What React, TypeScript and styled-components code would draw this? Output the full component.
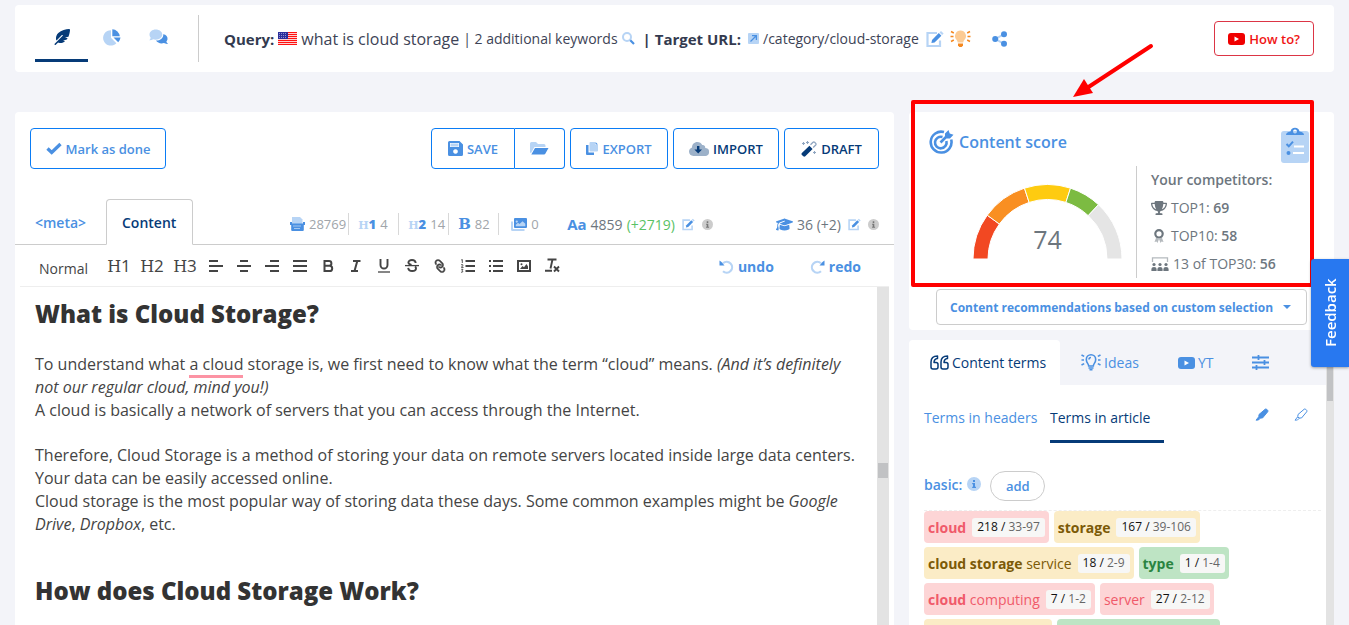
import React from "react";
import styled, { createGlobalStyle, css } from "styled-components";
import { FaFeatherPointed, FaGraduationCap, FaLink, FaTrophy } from "react-icons/fa6";

const blue = "#4a90e2";
const pale = "#b7d4f5";
const navy = "#063b78";
const grey = "#6d767e";

const GlobalStyle = createGlobalStyle`
  *, *::before, *::after { box-sizing: border-box; }
  body {
    margin: 0;
    background: #f3f4f9;
    font-family: "Open Sans", "Noto Sans", sans-serif;
    font-size: 14px;
    color: #3d4356;
  }
  button { font: inherit; background: none; border: 0; padding: 0; cursor: pointer; }
  a { color: inherit; text-decoration: none; }
  svg { flex: none; display: block; }
`;

const Page = styled.div`
  height: 100vh;
  overflow: hidden;
  display: flex;
  flex-direction: column;
  gap: 40px;
  padding: 5px 15px 0;
`;

/* ---------- header ---------- */

const Header = styled.header`
  display: flex;
  align-items: center;
  flex: none;
  height: 67px;
  padding: 0 20px;
  background: #fff;
  border-radius: 4px;
`;

const MainNav = styled.nav`
  display: flex;
  align-self: flex-start;
  margin-top: 10px;
  padding-right: 16px;
  border-right: 1px solid #ccc;
`;

const NavLink = styled.a<{ $active?: boolean }>`
  display: flex;
  align-items: center;
  justify-content: center;
  width: ${(p) => (p.$active ? 53 : 47)}px;
  height: 47px;
  border-bottom: 3px solid ${(p) => (p.$active ? navy : "transparent")};
`;

const Query = styled.div`
  display: flex;
  align-items: center;
  gap: 4px;
  margin-left: 25px;
  white-space: nowrap;
  font-size: 14px;
`;

const QueryLabel = styled.strong`
  font-size: 15px;
  color: #333a4f;
`;

const QueryText = styled.span`
  font-size: 16px;
`;

const TargetLabel = styled(QueryLabel)`
  margin: 0 3px 0 4px;
`;

const IconButton = styled.button<{ $before?: number }>`
  display: flex;
  align-items: center;
  margin-left: ${(p) => p.$before ?? 0}px;
`;

const HowTo = styled.a`
  display: flex;
  align-items: center;
  gap: 4px;
  height: 35px;
  margin-left: auto;
  padding: 0 13px;
  border: 1px solid #dc3545;
  border-radius: 4px;
  color: #f01414;
  font-size: 13px;
  font-weight: 600;
`;

/* ---------- columns ---------- */

const Columns = styled.main`
  display: grid;
  grid-template-columns: minmax(0, 1fr) 425px;
  gap: 15px;
  flex: 1;
  min-height: 0;
`;

const EditorCard = styled.section`
  display: flex;
  flex-direction: column;
  min-height: 0;
  background: #fff;
  border-radius: 4px 4px 0 0;
`;

const ActionBar = styled.div`
  display: flex;
  gap: 5px;
  padding: 16px 15px 30px;
`;

const Action = styled.button<{ $dark?: boolean; $wide?: number; $join?: "left" | "right" }>`
  display: flex;
  align-items: center;
  justify-content: center;
  gap: 4px;
  height: 41px;
  min-width: ${(p) => p.$wide}px;
  border: 1px solid #0a7cf5;
  border-radius: 4px;
  color: ${(p) => (p.$dark ? navy : blue)};
  font-size: 13px;
  font-weight: 600;
  ${(p) => p.$join === "left" && css`border-radius: 4px 0 0 4px;`}
  ${(p) => p.$join === "right" && css`border-radius: 0 4px 4px 0; border-left: 0;`}
`;

const ActionPair = styled.div`
  display: flex;
  margin-left: auto;
`;

const TabRow = styled.div`
  display: flex;
  align-items: flex-end;
  padding: 0 15px;
  border-bottom: 1px solid #ccc;
`;

const EditorTab = styled.button<{ $active?: boolean }>`
  height: 46px;
  margin-bottom: -1px;
  border: 1px solid ${(p) => (p.$active ? "#ccc" : "transparent")};
  border-bottom-color: ${(p) => (p.$active ? "#fff" : "transparent")};
  border-radius: 4px 4px 0 0;
  padding: 0 ${(p) => (p.$active ? 15 : 4)}px;
  min-width: ${(p) => (p.$active ? 87 : 76)}px;
  text-align: left;
  font-weight: 600;
  color: ${(p) => (p.$active ? navy : blue)};
`;

const Stats = styled.ul`
  display: flex;
  list-style: none;
  margin: 0 0 9px 94px;
  padding: 0;
`;

const Stat = styled.li`
  display: flex;
  align-items: center;
  gap: 4px;
  height: 22px;
  min-width: 50px;
  padding: 0 2px 0 9px;
  color: #a0a5aa;
  font-size: 13px;
  border-right: 1px solid #d8d8d8;
  &:first-child { padding-left: 3px; }
  &:last-child { border-right: 0; padding-left: 12px; }
`;

const HeadingMark = styled.b`
  font-family: "DejaVu Serif", serif;
  font-size: 11px;
  color: ${pale};
  span { color: ${blue}; font-family: "Open Sans", sans-serif; font-size: 13px; font-weight: 800; }
`;

const BoldMark = styled.b`
  font-family: "DejaVu Serif", serif;
  font-size: 15px;
  color: ${blue};
`;

const Counter = styled.div<{ $end?: boolean }>`
  display: flex;
  align-items: center;
  gap: 4px;
  height: 22px;
  margin: 0 0 9px ${(p) => (p.$end ? "auto" : "18px")};
  color: ${grey};
  font-size: 14px;
  white-space: nowrap;
  button { margin-left: 3px; }
`;

const CaseMark = styled.b`
  color: ${blue};
  font-size: 15px;
`;

const Gain = styled.span`
  color: #59c265;
`;

const FormatBar = styled.div`
  display: flex;
  align-items: center;
  gap: 14px;
  height: 42px;
  margin: 0 5px;
  padding: 0 28px 0 19px;
  border-bottom: 1px solid #eee;
  color: #444;
`;

const StylePicker = styled.button`
  width: 54px;
  padding-top: 5px;
  text-align: left;
  color: #444;
`;

const HeadingButtons = styled.div`
  display: flex;
  gap: 9px;
  margin-right: -2px;
`;

const HeadingButton = styled.button`
  width: 24px;
  color: #444;
  font-family: "DejaVu Serif", serif;
  font-size: 16px;
  white-space: nowrap;
  span { font-family: "Open Sans", sans-serif; font-size: 17px; }
`;

const FormatButton = styled.button`
  display: flex;
  align-items: center;
  justify-content: center;
  width: 14px;
  height: 18px;
  color: #444;
`;

const HistoryButtons = styled.div`
  display: flex;
  gap: 36px;
  margin-left: auto;
  padding-top: 2px;
`;

const HistoryButton = styled.button`
  display: flex;
  align-items: center;
  gap: 4px;
  color: ${blue};
  font-weight: 700;
`;

const EditorBody = styled.div`
  display: flex;
  flex: 1;
  min-height: 0;
  margin-right: 5px;
`;

const Article = styled.article`
  flex: 1;
  min-width: 0;
  overflow: hidden;
  padding: 10px 10px 0 20px;
  color: #444;
  font-size: 16px;
  line-height: 23px;
`;

const ArticleTitle = styled.h2`
  margin: 0 0 23px;
  color: #333;
  font-size: 24px;
  line-height: 33px;
  font-weight: 800;
`;

const Paragraph = styled.p<{ $last?: boolean; $spaced?: boolean }>`
  margin: 0 0 ${(p) => (p.$last ? 38 : p.$spaced ? 22 : 0)}px;
`;

const Misspelt = styled.span`
  border-bottom: 3px solid #fc93a4;
`;

const Track = styled.div<{ $size: number }>`
  flex: none;
  width: ${(p) => p.$size}px;
  padding: 0 1px;
  background: #e3e3e3;
`;

const Thumb = styled.div<{ $top: number; $length: number }>`
  height: ${(p) => p.$length}px;
  margin-top: ${(p) => p.$top}px;
  background: #c1c2c4;
`;

/* ---------- score card ---------- */

const Side = styled.aside`
  position: relative;
  display: flex;
  flex-direction: column;
  gap: 10px;
  min-height: 0;
`;

const ScoreCard = styled.section`
  flex: none;
  padding: 15px 25px 5px 20px;
  background: #fff;
  border-radius: 4px;
`;

const ScoreHead = styled.div`
  display: flex;
  justify-content: space-between;
  height: 39px;
`;

const ScoreTitle = styled.h3`
  display: flex;
  align-items: center;
  gap: 5px;
  height: 30px;
  margin: 0;
  color: ${blue};
  font-size: 16px;
  font-weight: 600;
`;

const ScoreBody = styled.div`
  display: flex;
  height: 112px;
`;

const GaugeBox = styled.div`
  flex: 1;
  padding: 18px 0 0 44px;
`;

const Competitors = styled.ul`
  list-style: none;
  flex: none;
  width: 173px;
  margin: 0;
  padding: 0 0 0 14px;
  border-left: 1px solid #ccc;
  color: ${grey};
`;

const Competitor = styled.li`
  display: flex;
  align-items: center;
  gap: 4px;
  height: 28px;
  padding-bottom: 1px;
  white-space: nowrap;
  b { font-weight: 600; }
`;

const Recommendations = styled.button`
  display: flex;
  align-items: center;
  gap: 10px;
  width: 371px;
  height: 36px;
  margin: 11px 0 0 7px;
  padding: 0 13px;
  border: 1px solid #ccc;
  border-radius: 4px;
  color: ${blue};
  font-size: 12px;
  font-weight: 700;
  white-space: nowrap;
`;

const Caret = styled.span`
  border: 4px solid transparent;
  border-top-color: ${blue};
  border-bottom: 0;
`;

const Highlight = styled.div`
  position: absolute;
  top: -12px;
  left: 2px;
  right: 20px;
  height: 187px;
  border: 4px solid #f00;
  border-radius: 2px;
  pointer-events: none;
`;

const Arrow = styled.svg`
  position: absolute;
  top: -72px;
  left: 160px;
  pointer-events: none;
`;

/* ---------- terms panel ---------- */

const TermsPanel = styled.section`
  display: flex;
  flex: 1;
  min-height: 0;
`;

const TermsMain = styled.div`
  display: flex;
  flex-direction: column;
  flex: 1;
  min-width: 0;
  overflow: hidden;
`;

const PanelTabs = styled.div`
  display: flex;
  flex: none;
`;

const PanelTab = styled.button<{ $active?: boolean }>`
  display: flex;
  align-items: center;
  gap: 3px;
  height: 45px;
  padding: 0 ${(p) => (p.$active ? 14 : 18)}px 0 21px;
  border-radius: 4px 4px 0 0;
  background: ${(p) => (p.$active ? "#fff" : "transparent")};
  color: ${(p) => (p.$active ? navy : blue)};
`;

const TermsBody = styled.div`
  flex: 1;
  min-height: 0;
  overflow: hidden;
  padding: 0 5px 0 15px;
  background: #fff;
`;

const TermTabs = styled.div`
  display: flex;
  align-items: center;
  height: 58px;
  gap: 25px;
  padding-right: 13px;
`;

const TermTab = styled.button<{ $active?: boolean }>`
  align-self: stretch;
  width: 114px;
  margin-right: ${(p) => (p.$active ? "auto" : "-13px")};
  padding-top: 10px;
  border-bottom: 3px solid ${(p) => (p.$active ? navy : "transparent")};
  color: ${(p) => (p.$active ? navy : blue)};
  text-align: left;
  white-space: nowrap;
`;

const GroupHead = styled.div`
  display: flex;
  align-items: center;
  gap: 5px;
  height: 68px;
  padding: 28px 0 10px;
  border-bottom: 1px dashed #eee;
  color: ${blue};
  font-weight: 600;
`;

const GroupName = styled.span`
  display: flex;
  align-items: center;
  gap: 5px;
  padding-bottom: 3px;
`;

const AddButton = styled.button`
  width: 55px;
  height: 30px;
  margin-left: 4px;
  border: 1px solid #ccc;
  border-radius: 15px;
  color: ${blue};
  font-size: 13px;
  font-weight: 600;
`;

const Chips = styled.div`
  display: flex;
  flex-direction: column;
  gap: 4px;
`;

const tones = {
  red: ["#fdd5d6", "#f05a6a"],
  amber: ["#fbecc6", "#7c5a07"],
  green: ["#bee4c4", "#2a8441"],
};

const Chip = styled.button<{ $tone: keyof typeof tones; $wide?: number }>`
  display: flex;
  align-items: center;
  gap: 6px;
  height: 32px;
  min-width: ${(p) => p.$wide ?? 0}px;
  padding: 0 4px;
  border-radius: 4px;
  background: ${(p) => tones[p.$tone][0]};
  color: ${(p) => tones[p.$tone][1]};
  white-space: nowrap;
`;

const Count = styled.span`
  height: 19px;
  padding: 0 5px;
  border-radius: 3px;
  background: #f7f7f6;
  color: #666;
  font-size: 12px;
  line-height: 18px;
  b { font-weight: 400; color: #111; }
`;

const ChipRow = styled.div`
  display: flex;
  gap: 5px;
`;

const Feedback = styled.button`
  position: fixed;
  top: 259px;
  right: 0;
  width: 38px;
  height: 108px;
  padding-right: 1px;
  background: #2878f0;
  box-shadow: 0 -1px 3px rgba(0, 0, 0, 0.35);
  color: #fff;
  font-size: 15px;
  font-weight: 600;
  writing-mode: vertical-rl;
  transform: rotate(180deg);
  border-radius: 0 3px 3px 0;
`;

/* ---------- icons ---------- */

const CheckIcon = () => (
  <svg width="16" height="13" viewBox="0 0 16 13">
    <path d="M1.500 6.500L5.700 10.500L14.500 2" fill="none" stroke={blue} strokeWidth="3.300" />
  </svg>
);

const PieIcon = () => (
  <svg width="18" height="17" viewBox="0 0 18 17">
    <path d="M8 1.200V8.800L13.400 14.200A7.700 7.700 0 1 1 8 1.200Z" fill={pale} />
    <path d="M9.300 0.300A7.800 7.800 0 0 1 16.800 7.300H9.300Z" fill={blue} />
    <path d="M10.500 8.600H17.500A7.800 7.800 0 0 1 15.200 13.300Z" fill={blue} />
  </svg>
);

const ChatIcon = () => (
  <svg width="19" height="16" viewBox="0 0 19 16">
    <path d="M14.200 5.200C17.200 5.600 18.900 7.700 18.500 10.200C18.300 11.400 17.500 12.300 17.400 12.500C17.600 13.500 18.300 14.200 18.900 14.900C17.400 15.100 15.900 14.700 14.900 14.100C11.700 15 8.500 14 7 11.600C11.500 11.500 14.700 8.900 14.200 5.200Z" fill={blue} />
    <path d="M6.700 0.500C10.400 0.500 13.300 2.700 13.300 5.500C13.300 8.300 10.400 10.700 6.700 10.700C5.800 10.700 4.900 10.500 4.200 10.300C3.200 11 1.800 11.400 0.300 11.300C1 10.500 1.600 9.600 1.700 8.800C1 7.900 0.500 6.800 0.500 5.500C0.500 2.700 3.200 0.500 6.700 0.500Z" fill={pale} />
  </svg>
);

const FlagIcon = () => (
  <svg width="19" height="13" viewBox="0 0 19 13">
    <rect width="19" height="13" fill="#fff" />
    {[0, 2, 4, 6, 8, 10, 12].map((y) => <rect key={y} y={y} width="19" height="1.200" fill="#f11" />)}
    <rect width="10" height="7" fill="#2b2f9b" />
    {[1.500, 3.500, 5.500].map((y) => <path key={y} d={`M1 ${y}H9`} stroke="#a9abdc" strokeWidth="0.800" strokeDasharray="1 1" />)}
  </svg>
);

const SearchIcon = () => (
  <svg width="13" height="13" viewBox="0 0 13 13">
    <circle cx="5" cy="5" r="4" fill="none" stroke={pale} strokeWidth="2" />
    <path d="M8.300 8.300L12 12" stroke={blue} strokeWidth="2.200" />
  </svg>
);

const ExternalIcon = () => (
  <svg width="11" height="11" viewBox="0 0 11 11">
    <rect width="11" height="11" rx="1" fill={pale} />
    <path d="M2.500 8.500L8 3M4 2.600H8.400V7" fill="none" stroke={blue} strokeWidth="1.300" />
  </svg>
);

const EditIcon = ({ size = 13 }: { size?: number }) => (
  <svg width={size} height={size} viewBox="0 0 18 17">
    <path d="M11 2.500H1.500V15.500H14V10" fill="none" stroke={pale} strokeWidth="2.200" />
    <path d="M6 9.400L12.800 2.600L15.400 5.200L8.600 12L5.400 12.600Z" fill={blue} />
    <path d="M13.500 1.900L15 0.400L17.600 3L16.100 4.500Z" fill={pale} />
  </svg>
);

const BulbIcon = () => (
  <svg width="21" height="18" viewBox="0 0 21 18">
    <path d="M10.500 0.500A5.500 5.500 0 0 0 6.300 9.500C7.200 10.500 7.600 11.400 7.700 12.500H13.300C13.400 11.400 13.800 10.500 14.700 9.500A5.500 5.500 0 0 0 10.500 0.500Z" fill="#fccb94" />
    <path d="M8 13.500H13V15.500L11.700 17H9.300L8 15.500Z" fill="#f5881f" />
    <path d="M1 1.500L3.800 3M0.500 6.500H3.500M1 11.500L3.800 10M20 1.500L17.200 3M20.500 6.500H17.500M20 11.500L17.200 10" stroke="#f5881f" strokeWidth="1.500" />
  </svg>
);

const ShareIcon = () => (
  <svg width="16" height="16" viewBox="0 0 16 16">
    <path d="M12 3.200L3.500 8L12 12.800" fill="none" stroke={pale} strokeWidth="2" />
    <g fill={blue}><circle cx="12" cy="3.200" r="3" /><circle cx="3.200" cy="8" r="3" /><circle cx="12" cy="12.800" r="3" /></g>
  </svg>
);

const SaveIcon = () => (
  <svg width="15" height="15" viewBox="0 0 15 15">
    <path fillRule="evenodd" d="M1.500 0H11.500L15 3.500V13.500Q15 15 13.500 15H1.500Q0 15 0 13.500V1.500Q0 0 1.500 0ZM2 2V6H11V2ZM7.500 8.200A2.300 2.300 0 1 0 7.510 8.200Z" fill={blue} />
    <rect x="2.500" y="2.500" width="8" height="3" fill={pale} />
  </svg>
);

const FolderIcon = () => (
  <svg width="19" height="13" viewBox="0 0 19 13">
    <path d="M1.500 0H6L8 2H14Q15.500 2 15.500 3.500V5H4.500L1 11L0 10.500V1.500Q0 0 1.500 0Z" fill={pale} />
    <path d="M5 6H18.500L15.300 11.800Q15 12.400 14 12.400H1.300Z" fill={blue} />
  </svg>
);

const CopyIcon = () => (
  <svg width="12" height="13" viewBox="0 0 12 13">
    <path d="M0 3H2.500V10.500H8V13H1Q0 13 0 12Z" fill={blue} />
    <path d="M4.500 0H9V3H12V8.500Q12 9.500 11 9.500H4.500Q3.500 9.500 3.500 8.500V1Q3.500 0 4.500 0Z" fill={pale} />
    <path d="M9.500 0L12 2.500H9.500Z" fill={blue} />
  </svg>
);

const CloudIcon = () => (
  <svg width="20" height="14" viewBox="0 0 20 14">
    <path d="M16.200 6C16.500 4 15 2.600 13.200 3C12.300 1.200 10.500 0 8.400 0C5.300 0 3 2.400 3 5.400C1.200 6 0 7.600 0 9.600C0 12.100 1.900 14 4.400 14H16A4 4 0 0 0 16.200 6Z" fill="#9cb1c9" />
    <path d="M8 4H10.400V7.500H13L9.200 11.500L5.400 7.500H8Z" fill={navy} />
  </svg>
);

const WandIcon = () => (
  <svg width="16" height="16" viewBox="0 0 16 16">
    <path d="M9.500 3.800L12 1.300Q12.800 0.600 13.600 1.300L14.700 2.400Q15.400 3.200 14.700 4L12.200 6.500" fill="none" stroke="#8fa5c0" strokeWidth="1.300" />
    <path d="M8.400 4.800L11.600 8L4.300 15.300Q3.300 16.200 2.300 15.300L0.900 13.900Q0 12.900 0.900 12.100Z" fill={navy} />
    <path d="M2.500 1V4M1 2.500H4M13.500 10V13M12 11.500H15M6.500 0V3M5 1.500H8" stroke="#8fa5c0" strokeWidth="1.100" />
  </svg>
);

const TypewriterIcon = () => (
  <svg width="15" height="14" viewBox="0 0 15 14">
    <path d="M2 0H10L12.500 2.500V7H2Z" fill={pale} />
    <path d="M0 5H2V6.500H13V5H15V8H13.800V13Q13.800 14 12.800 14H2.200Q1.200 14 1.200 13V8H0Z" fill={blue} />
    <path d="M3.500 9H11.500M4.500 11.500H10.500" stroke="#fff" strokeWidth="1" strokeDasharray="1 1" />
  </svg>
);

const ImagesIcon = () => (
  <svg width="16" height="13" viewBox="0 0 16 13">
    <path d="M0 3.500H2V11H13.500V13H1.500Q0 13 0 11.500Z" fill={pale} />
    <rect x="4" y="1" width="11" height="8" fill={pale} />
    <path fillRule="evenodd" d="M4 0H15Q16 0 16 1V9Q16 10 15 10H4Q3 10 3 9V1Q3 0 4 0ZM4.800 8.300H14.300V5.800L11.500 3.200L8.500 6L7 4.800L4.800 6.800ZM5 2.800A1.100 1.100 0 1 0 5.010 2.790Z" fill={blue} />
  </svg>
);

const InfoIcon = ({ size = 11, bg = "#ccc", fg = "#777" }: { size?: number; bg?: string; fg?: string }) => (
  <svg width={size} height={size} viewBox="0 0 14 14">
    <circle cx="7" cy="7" r="7" fill={bg} />
    <path d="M6 3H8V5H6ZM5.200 6H8V9.800H9V11H5.200V9.800H6V7.200H5.200Z" fill={fg} />
  </svg>
);

const LinesIcon = ({ rows }: { rows: [number, number][] }) => (
  <svg width="14" height="12" viewBox="0 0 14 12">
    {rows.map(([from, to], i) => <path key={i} d={`M${from} ${1 + i * 5}H${to}`} stroke="#444" strokeWidth="2" />)}
  </svg>
);

const BoldIcon = () => (
  <svg width="12" height="12" viewBox="0 0 12 12">
    <path d="M2.500 1H7A2.400 2.400 0 0 1 7 5.800H2.500ZM2.500 5.800H7.600A2.600 2.600 0 0 1 7.600 11H2.500Z" fill="none" stroke="#444" strokeWidth="2" />
  </svg>
);

const ItalicIcon = () => (
  <svg width="12" height="12" viewBox="0 0 12 12">
    <path d="M3 1H10.500M1 11H8M7.300 1L4.500 11" fill="none" stroke="#444" strokeWidth="2" />
  </svg>
);

const UnderlineIcon = () => (
  <svg width="12" height="14" viewBox="0 0 12 14">
    <path d="M2.500 0V6A3.500 3.500 0 0 0 9.500 6V0" fill="none" stroke="#444" strokeWidth="1.900" />
    <path d="M0 13H12" stroke="#444" strokeWidth="1.300" />
  </svg>
);

const StrikeIcon = () => (
  <svg width="14" height="13" viewBox="0 0 14 13">
    <path d="M10.700 4C10.500 2 9 1 7 1C4.800 1 3.400 2 3.400 3.500C3.400 4.800 4.500 5.400 6.500 6M3.200 8.800C3.400 10.800 5 12 7.200 12C9.500 12 11 10.900 11 9.200C11 8.400 10.600 7.900 10 7.500" fill="none" stroke="#444" strokeWidth="1.900" />
    <path d="M0 6.600H14" stroke="#444" strokeWidth="1.300" />
  </svg>
);

const ChainIcon = styled(FaLink)`
  transform: rotate(90deg);
  stroke: currentColor;
  stroke-width: 20px;
`;

const NumbersIcon = () => (
  <svg width="14" height="14" viewBox="0 0 14 14">
    <path d="M4.500 2H14M4.500 7H14M4.500 12H14" stroke="#444" strokeWidth="2" />
    <path d="M0.200 1L1.300 0.500V4M0 5.800Q2.500 5 1.800 6.700L0.300 8.400H2.600M0.200 10.300H2L1 11.600Q2.500 12 1.500 13.100L0 13.200" fill="none" stroke="#444" strokeWidth="0.900" />
  </svg>
);

const BulletsIcon = () => (
  <svg width="14" height="12" viewBox="0 0 14 12">
    <path d="M0 1H2M0 6H2M0 11H2M4 1H14M4 6H14M4 11H14" stroke="#444" strokeWidth="2" />
  </svg>
);

const PictureIcon = () => (
  <svg width="14" height="12" viewBox="0 0 14 12">
    <rect x="1" y="1" width="12" height="10" fill="none" stroke="#444" strokeWidth="2" />
    <path d="M3 9L5.500 6L7 7.200L9.500 4L11 6.500V9Z" fill="#444" />
    <circle cx="4.500" cy="4.300" r="1" fill="#444" />
  </svg>
);

const ClearIcon = () => (
  <svg width="15" height="15" viewBox="0 0 15 15">
    <path d="M2.500 1.500H11.500M7.500 1.500L5.500 10.500M0 12.800H7M9 8.500L14 13.500M14 8.500L9 13.500" fill="none" stroke="#444" strokeWidth="1.900" />
  </svg>
);

const TurnIcon = ({ forward }: { forward?: boolean }) => (
  <svg width="15" height="14" viewBox="0 0 15 14">
    <g transform={forward ? "translate(15 0) scale(-1 1)" : undefined}>
      <path d="M4 3.300A5.400 5.400 0 1 1 4 11.200" fill="none" stroke={pale} strokeWidth="2.200" />
      <path d="M0.500 0.500L2.500 2L5.500 5.500H0.500Z" fill={blue} />
    </g>
  </svg>
);

const TargetIcon = () => (
  <svg width="25" height="24" viewBox="0 0 25 24">
    <g fill="none" stroke={blue} strokeWidth="2.600">
      <path d="M15 2.100A10.400 10.400 0 1 0 22.200 9.500" />
      <path d="M13.500 7A5.800 5.800 0 1 0 17.400 11" />
      <path d="M11.500 12.500L18 6" />
    </g>
    <path d="M16 6V3.500L19.500 0L20.700 3.600L24.500 4.800L21 8.500H17.500Z" fill={blue} />
  </svg>
);

const ClipboardIcon = () => (
  <svg width="28" height="36" viewBox="0 0 28 36">
    <rect y="4" width="28" height="32" rx="3" fill={pale} />
    <path fillRule="evenodd" d="M5 8Q5 5 9.500 4.500A4.600 4.600 0 0 1 18.500 4.500Q23 5 23 8ZM14 2.500A2 2 0 1 0 14.010 2.500Z" fill={blue} />
    <path d="M5.500 17L7.800 19.300L12 14.700" fill="none" stroke={blue} strokeWidth="2" />
    <circle cx="7.500" cy="26" r="2" fill={blue} />
    <path d="M13 19.500H23M12 26H23" stroke="#fff" strokeWidth="2.200" />
  </svg>
);

const RosetteIcon = () => (
  <svg width="16" height="14" viewBox="0 0 16 14">
    <circle cx="8" cy="4.800" r="3.700" fill="none" stroke={grey} strokeWidth="2.200" />
    <path d="M5 9L3.500 13L5.500 12.600L6.500 14L8 10L9.500 14L10.500 12.600L12.500 13L11 9Z" fill="#b4b9bd" />
  </svg>
);

const AudienceIcon = () => (
  <svg width="18" height="14" viewBox="0 0 18 14">
    <path d="M1.500 5V0.800H16.500V5" fill="none" stroke="#b4b9bd" strokeWidth="1.300" />
    {[3, 9, 15].map((x) => (
      <g key={x} fill={grey}>
        <circle cx={x} cy="7.500" r="1.600" />
        <path d={`M${x - 2.600} 14V12Q${x - 2.600} 10 ${x} 10T${x + 2.600} 12V14Z`} />
      </g>
    ))}
  </svg>
);

const QuoteIcon = () => (
  <svg width="19" height="15" viewBox="0 0 19 15">
    {[0, 10].map((x) => (
      <path key={x} transform={`translate(${x} 0)`} d="M7.500 1C3.500 1 1 3 1 7V12Q1 14 3 14H6Q8 14 8 12V9.500Q8 7.500 6 7.500H4Q4 4 7.500 3.500Z" fill="none" stroke={navy} strokeWidth="1.500" strokeLinejoin="round" />
    ))}
  </svg>
);

const IdeaIcon = () => (
  <svg width="20" height="17" viewBox="0 0 20 17" fill="none" stroke={blue} strokeWidth="1.600">
    <path d="M7.700 12C7.700 9.500 5.300 9 5.300 5.500A4.700 4.700 0 0 1 14.700 5.500C14.700 9 12.300 9.500 12.300 12Z" />
    <path d="M7.500 14H12.500M8.500 15.800H11.500M0.500 1L3.200 2.400M0.500 6H3M0.500 11L3.200 9.600M19.500 1L16.800 2.400M19.500 6H17M19.500 11L16.800 9.600M8 5.500Q8 3.500 10 3.500" />
  </svg>
);

const PlayIcon = ({ fill }: { fill: string }) => (
  <svg width="17" height="12" viewBox="0 0 17 12">
    <rect width="17" height="12" rx="3" fill={fill} />
    <path d="M6.500 3.500L11 6L6.500 8.500Z" fill="#fff" />
  </svg>
);

const SlidersIcon = () => (
  <svg width="17" height="15" viewBox="0 0 17 15">
    <path d="M0 2.500H17M0 7.500H17M0 12.500H17M6.500 0V5M12.500 5V10M4.500 10V15" stroke={blue} strokeWidth="1.800" />
  </svg>
);

const MarkerIcon = ({ filled }: { filled?: boolean }) => (
  <svg width="14" height="13" viewBox="0 0 14 13">
    <path d="M4 6.500L10.200 1.200Q11 0.600 11.700 1.300L12.700 2.300Q13.300 3 12.700 3.800L7.500 10L5 10L3.800 8.800Z" fill={filled ? blue : "none"} stroke={blue} strokeWidth="1" />
    <path d="M3.500 9L5 10.500L3.500 12L1 12.200Z" fill={filled ? blue : "none"} stroke={blue} strokeWidth="0.900" />
  </svg>
);

const polar = (percent: number, r: number) => {
  const a = Math.PI * (1 - percent / 100);
  return `${74.500 + r * Math.cos(a)} ${75 - r * Math.sin(a)}`;
};

const bands: [number, number, string][] = [
  [0, 20, "#f24822"],
  [20, 40, "#f98f22"],
  [40, 60, "#fecb10"],
  [60, 74, "#7cbb42"],
  [74, 100, "#e5e5e5"],
];

const Gauge = ({ value }: { value: number }) => (
  <svg width="149" height="78" viewBox="0 0 149 78">
    {bands.map(([from, to, fill]) => (
      <path
        key={from}
        d={`M${polar(from, 74.500)}A74.500 74.500 0 0 1 ${polar(to, 74.500)}L${polar(to, 59.500)}A59.500 59.500 0 0 0 ${polar(from, 59.500)}Z`}
        fill={fill}
        stroke="#fff"
      />
    ))}
    <text x="74.500" y="65" textAnchor="middle" fontSize="25" fill={grey}>{value}</text>
  </svg>
);

/* ---------- page ---------- */

type Term = { tone: keyof typeof tones; strong?: string; plain?: string; used: number; range: string };

const termRows: Term[][] = [
  [
    { tone: "red", strong: "cloud", used: 218, range: "33-97" },
    { tone: "amber", strong: "storage", used: 167, range: "39-106" },
  ],
  [
    { tone: "amber", strong: "cloud storage", plain: "service", used: 18, range: "2-9" },
    { tone: "green", strong: "type", used: 1, range: "1-4" },
  ],
  [
    { tone: "red", strong: "cloud", plain: "computing", used: 7, range: "1-2" },
    { tone: "red", plain: "server", used: 27, range: "2-12" },
  ],
];

export default function App() {
  return (
    <Page>
      <GlobalStyle />
      <Header>
        <MainNav>
          <NavLink href="#write" $active aria-label="Write"><FaFeatherPointed size={16} color={navy} /></NavLink>
          <NavLink href="#stats" aria-label="Statistics"><PieIcon /></NavLink>
          <NavLink href="#questions" aria-label="Questions"><ChatIcon /></NavLink>
        </MainNav>
        <Query>
          <QueryLabel>Query:</QueryLabel>
          <FlagIcon />
          <QueryText>what is cloud storage</QueryText>
          <span>| 2 additional keywords</span>
          <IconButton aria-label="Search keywords"><SearchIcon /></IconButton>
          <TargetLabel>| Target URL:</TargetLabel>
          <ExternalIcon />
          <a href="#target">/category/cloud-storage</a>
          <IconButton aria-label="Edit URL" $before={3}><EditIcon size={18} /></IconButton>
          <IconButton aria-label="Tips" $before={2}><BulbIcon /></IconButton>
          <IconButton aria-label="Share" $before={17}><ShareIcon /></IconButton>
        </Query>
        <HowTo href="#howto"><PlayIcon fill="#f00000" />How to?</HowTo>
      </Header>

      <Columns>
        <EditorCard>
          <ActionBar>
            <Action $wide={136}><CheckIcon />Mark as done</Action>
            <ActionPair>
              <Action $wide={84} $join="left"><SaveIcon />SAVE</Action>
              <Action $wide={50} $join="right" aria-label="Open"><FolderIcon /></Action>
            </ActionPair>
            <Action $wide={98}><CopyIcon />EXPORT</Action>
            <Action $wide={106} $dark><CloudIcon />IMPORT</Action>
            <Action $wide={95} $dark><WandIcon />DRAFT</Action>
          </ActionBar>

          <TabRow>
            <EditorTab>&lt;meta&gt;</EditorTab>
            <EditorTab $active>Content</EditorTab>
            <Stats>
              <Stat><TypewriterIcon />28769</Stat>
              <Stat><HeadingMark>H<span>1</span></HeadingMark>4</Stat>
              <Stat><HeadingMark>H<span>2</span></HeadingMark>14</Stat>
              <Stat><BoldMark>B</BoldMark>82</Stat>
              <Stat><ImagesIcon />0</Stat>
            </Stats>
            <Counter>
              <CaseMark>Aa</CaseMark>4859 <Gain>(+2719)</Gain>
              <IconButton aria-label="Edit length"><EditIcon /></IconButton>
              <IconButton aria-label="Length info"><InfoIcon /></IconButton>
            </Counter>
            <Counter $end>
              <FaGraduationCap size={17} color={blue} />36 (+2)
              <IconButton aria-label="Edit readability"><EditIcon /></IconButton>
              <IconButton aria-label="Readability info"><InfoIcon /></IconButton>
            </Counter>
          </TabRow>

          <FormatBar>
            <StylePicker>Normal</StylePicker>
            <HeadingButtons>
              {[1, 2, 3].map((n) => <HeadingButton key={n}>H<span>{n}</span></HeadingButton>)}
            </HeadingButtons>
            <FormatButton aria-label="Align left"><LinesIcon rows={[[0, 9], [0, 14], [0, 9]]} /></FormatButton>
            <FormatButton aria-label="Align center"><LinesIcon rows={[[3, 11], [0, 14], [3, 11]]} /></FormatButton>
            <FormatButton aria-label="Align right"><LinesIcon rows={[[5, 14], [0, 14], [5, 14]]} /></FormatButton>
            <FormatButton aria-label="Justify"><LinesIcon rows={[[0, 14], [0, 14], [0, 14]]} /></FormatButton>
            <FormatButton aria-label="Bold"><BoldIcon /></FormatButton>
            <FormatButton aria-label="Italic"><ItalicIcon /></FormatButton>
            <FormatButton aria-label="Underline"><UnderlineIcon /></FormatButton>
            <FormatButton aria-label="Strike through"><StrikeIcon /></FormatButton>
            <FormatButton aria-label="Link"><ChainIcon size={14} /></FormatButton>
            <FormatButton aria-label="Numbered list"><NumbersIcon /></FormatButton>
            <FormatButton aria-label="Bulleted list"><BulletsIcon /></FormatButton>
            <FormatButton aria-label="Image"><PictureIcon /></FormatButton>
            <FormatButton aria-label="Clear formatting"><ClearIcon /></FormatButton>
            <HistoryButtons>
              <HistoryButton><TurnIcon />undo</HistoryButton>
              <HistoryButton><TurnIcon forward />redo</HistoryButton>
            </HistoryButtons>
          </FormatBar>

          <EditorBody>
            <Article>
              <ArticleTitle>What is Cloud Storage?</ArticleTitle>
              <Paragraph>
                To understand what <Misspelt>a cloud</Misspelt> storage is, we first need to know what the term “cloud” means. <em>(And it’s definitely not our regular cloud, mind you!)</em>
              </Paragraph>
              <Paragraph $spaced>A cloud is basically a network of servers that you can access through the Internet.</Paragraph>
              <Paragraph>Therefore, Cloud Storage is a method of storing your data on remote servers located inside large data centers. Your data can be easily accessed online.</Paragraph>
              <Paragraph $last>
                Cloud storage is the most popular way of storing data these days. Some common examples might be <em>Google Drive</em>, <em>Dropbox</em>, etc.
              </Paragraph>
              <ArticleTitle>How does Cloud Storage Work?</ArticleTitle>
            </Article>
            <Track $size={12}><Thumb $top={176} $length={15} /></Track>
          </EditorBody>
        </EditorCard>

        <Side>
          <ScoreCard>
            <ScoreHead>
              <ScoreTitle><TargetIcon />Content score</ScoreTitle>
              <ClipboardIcon />
            </ScoreHead>
            <ScoreBody>
              <GaugeBox><Gauge value={74} /></GaugeBox>
              <Competitors>
                <Competitor><b>Your competitors:</b></Competitor>
                <Competitor><FaTrophy size={16} /><span>TOP1: <b>69</b></span></Competitor>
                <Competitor><RosetteIcon /><span>TOP10: <b>58</b></span></Competitor>
                <Competitor><AudienceIcon /><span>13 of TOP30: <b>56</b></span></Competitor>
              </Competitors>
            </ScoreBody>
            <Recommendations aria-haspopup="true">Content recommendations based on custom selection<Caret /></Recommendations>
          </ScoreCard>

          <TermsPanel>
            <TermsMain>
              <PanelTabs>
                <PanelTab $active><QuoteIcon />Content terms</PanelTab>
                <PanelTab><IdeaIcon />Ideas</PanelTab>
                <PanelTab><PlayIcon fill={blue} />YT</PanelTab>
                <PanelTab aria-label="Settings"><SlidersIcon /></PanelTab>
              </PanelTabs>
              <TermsBody>
                <TermTabs>
                  <TermTab>Terms in headers</TermTab>
                  <TermTab $active>Terms in article</TermTab>
                  <IconButton aria-label="Highlight terms"><MarkerIcon filled /></IconButton>
                  <IconButton aria-label="Clear highlights"><MarkerIcon /></IconButton>
                </TermTabs>
                <GroupHead>
                  <GroupName>basic: <InfoIcon size={14} bg={pale} fg={blue} /></GroupName>
                  <AddButton>add</AddButton>
                </GroupHead>
                <Chips>
                  {termRows.map((row, i) => (
                    <ChipRow key={i}>
                      {row.map((t) => (
                        <Chip key={t.range} $tone={t.tone}>
                          <span>{t.strong && <b>{t.strong}</b>}{t.strong && t.plain && " "}{t.plain}</span>
                          <Count><b>{t.used} /</b> {t.range}</Count>
                        </Chip>
                      ))}
                    </ChipRow>
                  ))}
                  <ChipRow>
                    <Chip as="div" $tone="amber" $wide={128} />
                    <Chip as="div" $tone="green" $wide={163} />
                  </ChipRow>
                </Chips>
              </TermsBody>
            </TermsMain>
            <Track $size={8}><Thumb $top={0} $length={61} /></Track>
          </TermsPanel>

          <Highlight />
          <Arrow width="90" height="60" viewBox="0 0 90 60">
            <path d="M82 6L18 48" stroke="#f00" strokeWidth="4" strokeLinecap="round" />
            <path d="M4 57L15 39L24 53Z" fill="#f00" />
          </Arrow>
        </Side>
      </Columns>
      <Feedback>Feedback</Feedback>
    </Page>
  );
}
